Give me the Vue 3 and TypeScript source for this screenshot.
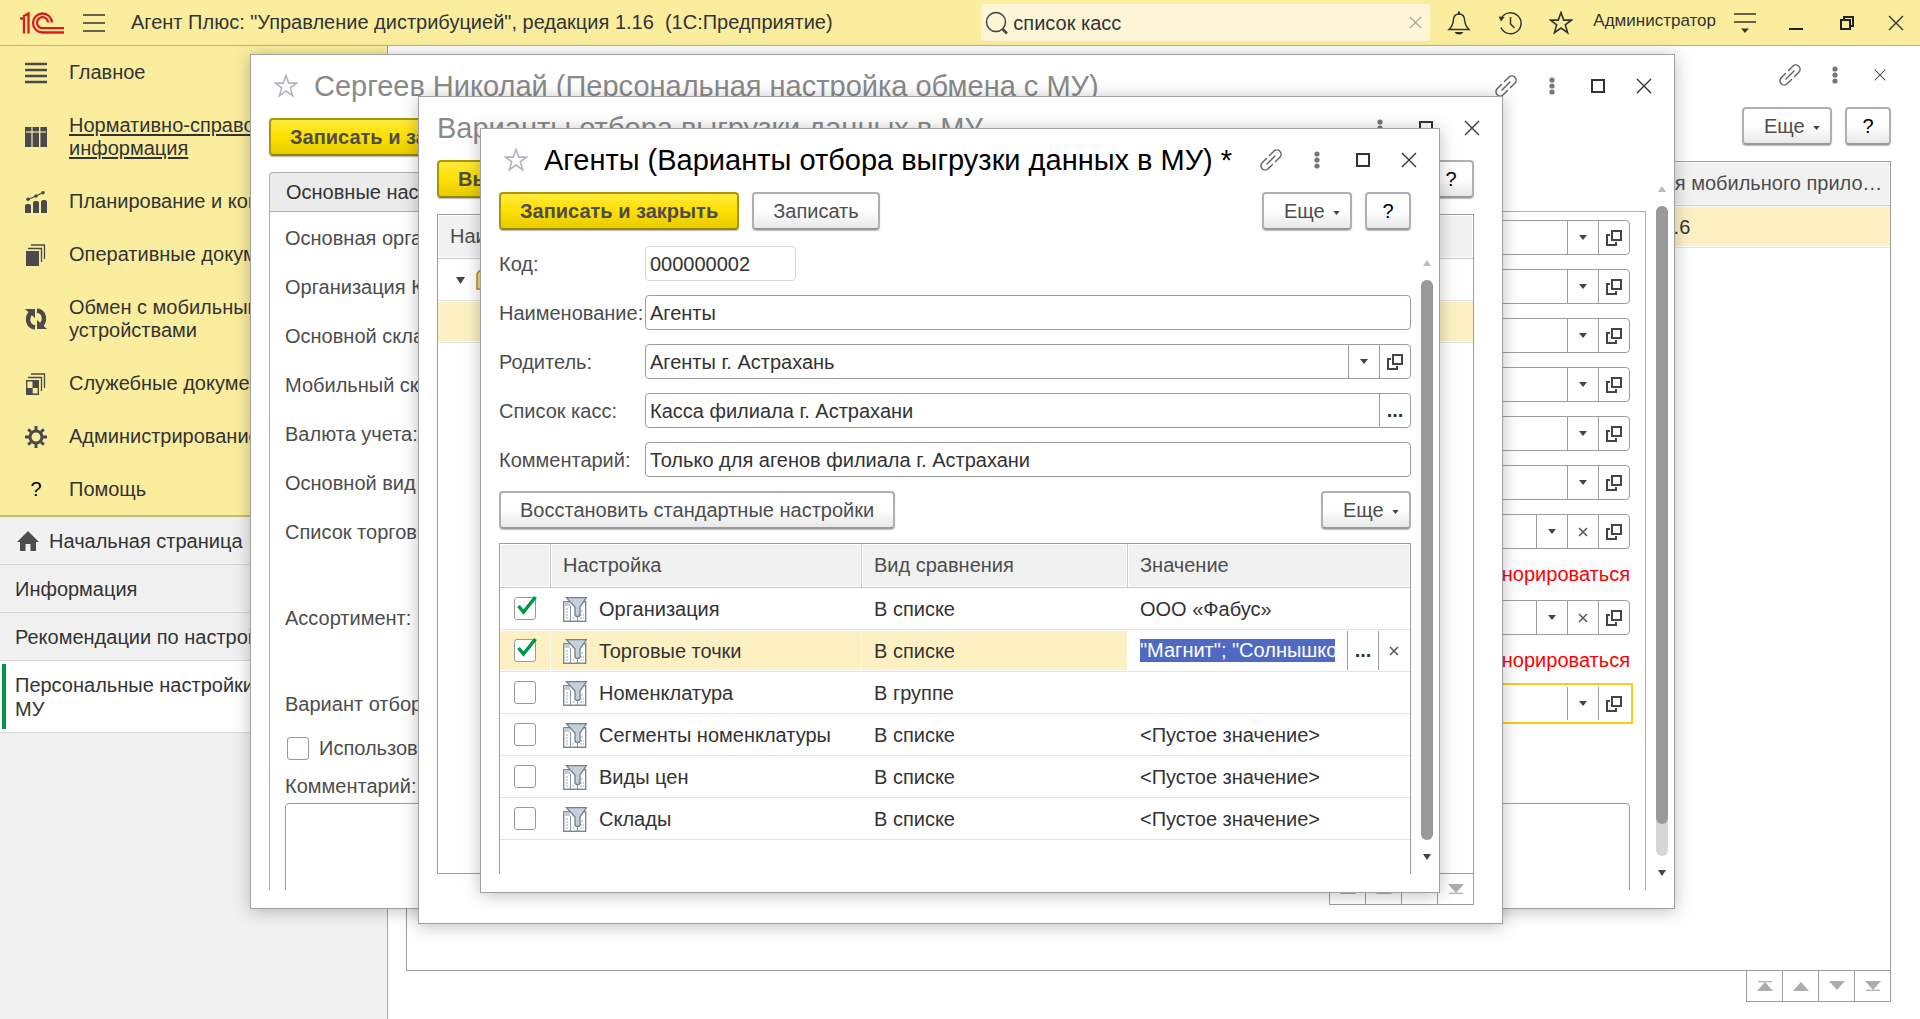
<script setup lang="ts">
import { onMounted, ref } from 'vue'

interface Section { icon: string; text: string; current?: boolean }
interface FormRow { id: string; label: string; clear?: boolean; note?: boolean; focus?: boolean }
interface Setting { on: boolean; name: string; kind: string; value: string; current?: boolean }

const sections: Section[] = [
  { icon: 'lines', text: 'Главное' },
  { icon: 'books', text: 'Нормативно-справочная информация', current: true },
  { icon: 'chart', text: 'Планирование и контроль' },
  { icon: 'stack', text: 'Оперативные документы' },
  { icon: 'sync', text: 'Обмен с мобильными устройствами' },
  { icon: 'stack2', text: 'Служебные документы' },
  { icon: 'gear', text: 'Администрирование' },
  { icon: '', text: 'Помощь' },
]

const tabs = ['Информация', 'Рекомендации по настройке', 'Персональные настройки МУ']

const formRows: FormRow[] = [
  { id: 'org', label: 'Основная организация:' },
  { id: 'orgk', label: 'Организация КПК:' },
  { id: 'store', label: 'Основной склад:' },
  { id: 'mstore', label: 'Мобильный склад:' },
  { id: 'cur', label: 'Валюта учета:' },
  { id: 'price', label: 'Основной вид цен:' },
  { id: 'shops', label: 'Список торговых точек:', clear: true, note: true },
  { id: 'goods', label: 'Ассортимент:', clear: true, note: true },
  { id: 'filter', label: 'Вариант отбора:', focus: true },
]

const settings = ref<Setting[]>([
  { on: true, name: 'Организация', kind: 'В списке', value: 'ООО «Фабус»' },
  { on: true, name: 'Торговые точки', kind: 'В списке', value: '"Магнит"; "Солнышко"', current: true },
  { on: false, name: 'Номенклатура', kind: 'В группе', value: '' },
  { on: false, name: 'Сегменты номенклатуры', kind: 'В списке', value: '<Пустое значение>' },
  { on: false, name: 'Виды цен', kind: 'В списке', value: '<Пустое значение>' },
  { on: false, name: 'Склады', kind: 'В списке', value: '<Пустое значение>' },
])

const pagers = ['first', 'up', 'down', 'last']
const search = ref('список касс')
const code = ref('000000002')
const title = ref('Агенты')
const parent = ref('Агенты г. Астрахань')
const cash = ref('Касса филиала г. Астрахани')
const comment = ref('Только для агенов филиала г. Астрахани')
const scrollBack = ref(95)
const scrollFront = ref(100)

// The edited cell opens with its whole value selected, caret at the start.
onMounted(() => {
  const edit = document.querySelector<HTMLInputElement>('#edit-value')
  if (!edit) return
  edit.focus({ preventScroll: true })
  edit.setSelectionRange(0, edit.value.length, 'backward')
  edit.scrollLeft = 0
  requestAnimationFrame(() => { edit.scrollLeft = 0 })
})
</script>

<template>
  <svg class="sprite" aria-hidden="true">
    <symbol id="i-lines" viewBox="0 0 22 22"><path d="M0 2h22M0 8h22M0 14h22M0 20h22" stroke="#4a4a4a" stroke-width="2.6" /></symbol>
    <symbol id="i-books" viewBox="0 0 22 22"><path d="M0 1h6.4v20H0zM7.6 1H14v20H7.6zM15.4 1H22v20h-6.6z" fill="#4a4a4a" /><path d="M1 6h20" stroke="#fbed9e" stroke-width="1.2" /></symbol>
    <symbol id="i-chart" viewBox="0 0 22 22"><path d="M0 15q0-2 2-2h2q2 0 2 2v7H0zM8 12q0-2 2-2h2q2 0 2 2v10H8zM16 11q0-2 2-2h2q2 0 2 2v11h-6z" fill="#4a4a4a" /><path d="M3 8.500L11 5l7-3.500" stroke="#4a4a4a" fill="none" stroke-width="1.2" /><circle cx="3" cy="8.200" r="1.800" fill="#4a4a4a" /><circle cx="11" cy="5" r="1.800" fill="#4a4a4a" /><circle cx="18" cy="1.800" r="1.800" fill="#4a4a4a" /></symbol>
    <symbol id="i-stack" viewBox="0 0 22 22"><path d="M1 7h13v15H1z" fill="#4a4a4a" /><path d="M3 4.500h13.500V18M6 1h13.500v14" fill="none" stroke="#4a4a4a" stroke-width="1.3" /></symbol>
    <symbol id="i-stack2" viewBox="0 0 22 22"><path d="M1.700 7.700h11.600v13.600H1.700z" fill="none" stroke="#4a4a4a" stroke-width="1.4" /><path d="M7.500 8h6v7h-6zM1.700 15h6v6.500h-6z" fill="#4a4a4a" /><path d="M3 4.500h13.500V18M6 1h13.500v14" fill="none" stroke="#4a4a4a" stroke-width="1.3" /></symbol>
    <symbol id="i-sync" viewBox="0 0 22 22"><path d="M10 19.500C2.500 18.500 1 9.500 6 4.500M12 2.500C19.500 3.500 21 12.500 16 17.500" fill="none" stroke="#4a4a4a" stroke-width="4.4" /><path d="M0 1h10v9zM22 21H12v-9z" fill="#4a4a4a" /></symbol>
    <symbol id="i-gear" viewBox="0 0 22 22"><circle cx="11" cy="11" r="6" fill="none" stroke="#4a4a4a" stroke-width="3" /><path d="M11 0v4M11 18v4M0 11h4M18 11h4M3.200 3.200L6 6M16 16l2.800 2.800M3.200 18.800L6 16M16 6l2.800-2.800" stroke="#4a4a4a" stroke-width="3" /></symbol>
    <symbol id="i-home" viewBox="0 0 22 20"><path d="M11 0l11 11h-3v9h-5.500v-7h-5v7H3v-9H0z" fill="#4d4d4d" /></symbol>
    <symbol id="i-star" viewBox="0 0 24 24"><path d="M12 1.500l2.700 7.600h7.800l-6.200 4.800 2.300 7.800L12 17l-6.600 4.700 2.300-7.800L1.500 9.100h7.800z" fill="none" stroke="currentColor" stroke-width="1.6" /></symbol>
    <symbol id="i-link" viewBox="0 0 24 24"><g fill="none" stroke="#666" stroke-width="1.5" stroke-linecap="round"><path d="M8 16l8-8" /><path d="M10.500 7.500l4.300-4.300a4.200 4.200 0 016 6L16.500 13.500M13.500 16.500l-4.300 4.300a4.200 4.200 0 01-6-6L7.500 10.500" /></g></symbol>
    <symbol id="i-dots" viewBox="0 0 6 18"><circle cx="3" cy="3" r="2.600" fill="#777" /><circle cx="3" cy="9" r="2.600" fill="#777" /><circle cx="3" cy="15" r="2.600" fill="#777" /></symbol>
    <symbol id="i-max" viewBox="0 0 14 14"><path d="M1 1h12v12H1z" fill="none" stroke="#333" stroke-width="2" /></symbol>
    <symbol id="i-close" viewBox="0 0 16 16"><path d="M1 1l14 14M15 1L1 15" stroke="currentColor" stroke-width="1.4" /></symbol>
    <symbol id="i-x" viewBox="0 0 10 10"><path d="M1 1l8 8M9 1L1 9" stroke="#555" stroke-width="1.5" /></symbol>
    <symbol id="i-open" viewBox="0 0 16 16"><path d="M6 1h9v9H6z" fill="none" stroke="#444" stroke-width="2" /><path d="M4 5H1v10h9v-3" fill="none" stroke="#444" stroke-width="2" /></symbol>
    <symbol id="i-caret" viewBox="0 0 8 5"><path d="M0 0h8L4 5z" fill="#444" /></symbol>
    <symbol id="i-first" viewBox="0 0 16 10"><path d="M1 .7h14" stroke="#a9a9a9" stroke-width="1.2" /><path d="M8 1l8 9H0z" fill="#adadad" /></symbol>
    <symbol id="i-up" viewBox="0 0 16 10"><path d="M8 1l8 9H0z" fill="#adadad" /></symbol>
    <symbol id="i-down" viewBox="0 0 16 10"><path d="M8 9L0 0h16z" fill="#adadad" /></symbol>
    <symbol id="i-last" viewBox="0 0 16 10"><path d="M8 9L0 0h16z" fill="#adadad" /><path d="M1 9.300h14" stroke="#a9a9a9" stroke-width="1.2" /></symbol>
    <symbol id="i-filter" viewBox="0 0 24 25"><path d="M.7 4.700h22v19.600H.7z" fill="#fff" stroke="#7d8a94" stroke-width="1.4" /><path d="M1 5h6v4H1z" fill="#c3ccd4" /><path d="M7.500 9v15M14.500 9v15" stroke="#8a97a1" /><path d="M3 12h2.500M3 15h2.500M3 18h2.500M3 21h2.500M9.500 21h3M17 18h4M17 21h4M18 14h3" stroke="#9ba6af" stroke-dasharray="2 1" /><path d="M3.500.7h20L17 10v7.500q0 2-2.500 2T12 17.500V10z" fill="#c4cfdb" stroke="#73818c" stroke-width="1.3" /></symbol>
  </svg>

  <div class="app">
    <header class="topbar">
      <svg class="logo" viewBox="0 0 44 22" role="img" aria-label="1С"><g fill="none" stroke="#da1b20" stroke-width="2.3"><path d="M0 6.500h4v15M3 4.500l5.500-3v20" /><path d="M32 10.500A9.500 9.500 0 1022.500 20.500H44M28 10.500A5.500 5.500 0 1022.500 16.200H44" /></g></svg>
      <button class="flat burger" aria-label="Меню"><svg width="22" height="18" viewBox="0 0 22 18"><path d="M0 1h22M0 9h22M0 17h22" stroke="#333" stroke-width="1.5" /></svg></button>
      <h1>Агент Плюс: "Управление дистрибуцией", редакция 1.16&nbsp; (1С:Предприятие)</h1>
      <div class="search">
        <svg width="24" height="24" viewBox="0 0 24 24" fill="none" stroke="#444" stroke-width="1.5"><circle cx="11" cy="11" r="9.500" /><path d="M17.500 18l4.500 4.500" stroke-width="2.5" /></svg>
        <input v-model="search" aria-label="Поиск">
        <button class="flat" aria-label="Очистить"><svg class="muted" width="13" height="13"><use href="#i-close" /></svg></button>
      </div>
      <div class="tools">
        <button class="flat slot" aria-label="Уведомления"><svg width="22" height="24" viewBox="0 0 22 24"><path d="M1 18.500c3-3 4-5 4.300-9C5.500 5.500 7.500 3 11 3s5.500 2.500 5.700 6.500c.3 4 1.300 6 4.300 9z" fill="none" stroke="#333" stroke-width="1.5" /><path d="M11 .5v3" stroke="#333" stroke-width="2" /><path d="M6.500 21h9q-1.500 2.500-4.500 2.500T6.500 21z" fill="#333" /></svg></button>
        <button class="flat slot" aria-label="История"><svg width="24" height="24" viewBox="0 0 24 24" fill="none" stroke="#333" stroke-width="1.5"><path d="M3.500 7A10.500 10.500 0 113 16.500M12.500 6v7l4 4" /><path d="M.5 5.500l6 .5-3.500 4.500z" fill="#333" stroke="none" /></svg></button>
        <button class="flat slot dark" aria-label="Избранное"><svg width="24" height="24"><use href="#i-star" /></svg></button>
        <a class="user" href="#">Администратор</a>
        <button class="flat slot" aria-label="Настройки"><svg width="22" height="20" viewBox="0 0 22 20"><path d="M0 1h22M0 9h22" stroke="#333" stroke-width="1.6" /><path d="M7 15.500h8l-4 4.500z" fill="#333" /></svg></button>
        <button class="flat slot" aria-label="Свернуть"><svg width="14" height="16" viewBox="0 0 14 16"><path d="M0 14h14" stroke="#222" stroke-width="2" /></svg></button>
        <button class="flat slot" aria-label="Восстановить"><svg width="14" height="14" viewBox="0 0 14 14" fill="none" stroke="#222" stroke-width="2"><path d="M1 4h9v9H1zM4 4V1h9v9h-3" /></svg></button>
        <button class="flat slot dark" aria-label="Закрыть"><svg width="16" height="16"><use href="#i-close" /></svg></button>
      </div>
    </header>

    <div class="workspace">
      <aside>
        <nav class="sections">
          <a v-for="s in sections" :key="s.text" href="#" :class="{ current: s.current }">
            <svg v-if="s.icon" width="22" height="22"><use :href="'#i-' + s.icon" /></svg>
            <span v-else class="question">?</span>
            <span class="caption">{{ s.text }}</span>
          </a>
        </nav>
        <nav class="tabs">
          <a href="#" class="home"><svg width="22" height="20"><use href="#i-home" /></svg>Начальная страница</a>
          <a v-for="(t, i) in tabs" :key="t" href="#" :class="{ open: i === 2 }"><span>{{ t }}</span></a>
        </nav>
      </aside>

      <main class="page">
        <div class="win-head">
          <div class="title"></div>
          <button class="flat tool" aria-label="Ссылка"><svg width="24" height="24"><use href="#i-link" /></svg></button>
          <button class="flat tool" aria-label="Ещё действия"><svg width="6" height="18"><use href="#i-dots" /></svg></button>
          <button class="flat tool" aria-label="Закрыть"><svg width="12" height="12"><use href="#i-close" /></svg></button>
        </div>
        <div class="commands">
          <span class="spring"></span>
          <button class="btn more">Еще <svg width="7" height="4"><use href="#i-caret" /></svg></button>
          <button class="btn help">?</button>
        </div>
        <div class="list">
          <div class="grid-box">
            <table>
              <colgroup><col><col class="version"></colgroup>
              <thead><tr><th></th><th>Версия мобильного приложения</th></tr></thead>
              <tbody><tr class="current"><td></td><td>1.16.1.6</td></tr></tbody>
            </table>
          </div>
          <div class="pager"><button v-for="p in pagers" :key="p" :aria-label="p"><svg width="16" height="10"><use :href="'#i-' + p" /></svg></button></div>
        </div>
      </main>
    </div>

    <section class="window exchange">
      <div class="win-head">
        <button class="flat fav" aria-label="Избранное"><svg width="24" height="24"><use href="#i-star" /></svg></button>
        <h2 class="title">Сергеев Николай (Персональная настройка обмена с МУ)</h2>
        <button class="flat tool" aria-label="Ссылка"><svg width="24" height="24"><use href="#i-link" /></svg></button>
        <button class="flat tool" aria-label="Ещё действия"><svg width="6" height="18"><use href="#i-dots" /></svg></button>
        <button class="flat tool" aria-label="Развернуть"><svg width="14" height="14"><use href="#i-max" /></svg></button>
        <button class="flat tool" aria-label="Закрыть"><svg width="16" height="16"><use href="#i-close" /></svg></button>
      </div>
      <div class="commands"><button class="btn primary">Записать и закрыть</button></div>
      <div class="body">
        <div class="content">
          <button class="tab">Основные настройки</button>
          <div class="panel">
            <template v-for="r in formRows" :key="r.id">
              <div class="row wide">
                <label :for="r.id">{{ r.label }}</label>
                <div class="field" :class="{ focus: r.focus }">
                  <input :id="r.id">
                  <button aria-label="Выбрать"><svg width="8" height="5"><use href="#i-caret" /></svg></button>
                  <button v-if="r.clear" aria-label="Очистить"><svg width="10" height="10"><use href="#i-x" /></svg></button>
                  <button aria-label="Открыть"><svg width="16" height="16"><use href="#i-open" /></svg></button>
                </div>
              </div>
              <p v-if="r.note" class="note">Если указан вариант отбора, реквизит будет игнорироваться</p>
            </template>
            <label class="tick"><span class="check"><input type="checkbox"></span>Использовать</label>
            <div class="remark">
              <label for="remark">Комментарий:</label>
              <textarea id="remark"></textarea>
            </div>
          </div>
        </div>
        <div class="scroll">
          <span class="arrow top"></span>
          <div class="track"><div class="thumb" :style="{ height: scrollBack + '%' }"></div></div>
          <span class="arrow"></span>
        </div>
      </div>
    </section>

    <section class="window variants">
      <div class="win-head bare">
        <h2 class="title">Варианты отбора выгрузки данных в МУ</h2>
        <button class="flat tool" aria-label="Ещё действия"><svg width="6" height="18"><use href="#i-dots" /></svg></button>
        <button class="flat tool" aria-label="Развернуть"><svg width="14" height="14"><use href="#i-max" /></svg></button>
        <button class="flat tool" aria-label="Закрыть"><svg width="16" height="16"><use href="#i-close" /></svg></button>
      </div>
      <div class="commands">
        <button class="btn primary">Выбрать</button>
        <span class="spring"></span>
        <button class="btn help">?</button>
      </div>
      <div class="list">
        <div class="grid-box">
          <table>
            <thead><tr><th>Наименование</th></tr></thead>
            <tbody>
              <tr><td><span class="branch"><svg width="9" height="7" viewBox="0 0 9 7"><path d="M0 0h9L4.500 7z" fill="#444" /></svg><svg width="22" height="20" viewBox="0 0 22 20"><path d="M1 4l2-3h6l2 3h10v15H1z" fill="#f8d878" stroke="#b58a30" stroke-width="1.5" /></svg>Агенты</span></td></tr>
              <tr class="current"><td></td></tr>
            </tbody>
          </table>
        </div>
        <div class="pager"><button v-for="p in pagers" :key="p" :aria-label="p"><svg width="16" height="10"><use :href="'#i-' + p" /></svg></button></div>
      </div>
    </section>

    <section class="window agents">
      <div class="win-head">
        <button class="flat fav" aria-label="Избранное"><svg width="24" height="24"><use href="#i-star" /></svg></button>
        <h2 class="title">Агенты (Варианты отбора выгрузки данных в МУ) *</h2>
        <button class="flat tool" aria-label="Ссылка"><svg width="24" height="24"><use href="#i-link" /></svg></button>
        <button class="flat tool" aria-label="Ещё действия"><svg width="6" height="18"><use href="#i-dots" /></svg></button>
        <button class="flat tool" aria-label="Развернуть"><svg width="14" height="14"><use href="#i-max" /></svg></button>
        <button class="flat tool" aria-label="Закрыть"><svg width="16" height="16"><use href="#i-close" /></svg></button>
      </div>
      <div class="commands">
        <button class="btn primary">Записать и закрыть</button>
        <button class="btn">Записать</button>
        <span class="spring"></span>
        <button class="btn more">Еще <svg width="7" height="4"><use href="#i-caret" /></svg></button>
        <button class="btn help">?</button>
      </div>
      <div class="body">
        <div class="content">
          <div class="form">
            <div class="row"><label for="code">Код:</label><div class="field short"><input id="code" v-model="code"></div></div>
            <div class="row"><label for="title">Наименование:</label><div class="field"><input id="title" v-model="title"></div></div>
            <div class="row">
              <label for="parent">Родитель:</label>
              <div class="field">
                <input id="parent" v-model="parent">
                <button aria-label="Выбрать"><svg width="8" height="5"><use href="#i-caret" /></svg></button>
                <button aria-label="Открыть"><svg width="16" height="16"><use href="#i-open" /></svg></button>
              </div>
            </div>
            <div class="row"><label for="cash">Список касс:</label><div class="field"><input id="cash" v-model="cash"><button>...</button></div></div>
            <div class="row"><label for="comment">Комментарий:</label><div class="field"><input id="comment" v-model="comment"></div></div>
          </div>
          <div class="commands inner">
            <button class="btn">Восстановить стандартные настройки</button>
            <span class="spring"></span>
            <button class="btn more">Еще <svg width="7" height="4"><use href="#i-caret" /></svg></button>
          </div>
          <div class="grid-box">
            <table>
              <colgroup><col class="c-on"><col class="c-name"><col class="c-kind"><col></colgroup>
              <thead><tr><th></th><th>Настройка</th><th>Вид сравнения</th><th>Значение</th></tr></thead>
              <tbody>
                <tr v-for="s in settings" :key="s.name" :class="{ current: s.current }">
                  <td class="on">
                    <label class="check">
                      <input v-model="s.on" type="checkbox" :aria-label="s.name">
                      <svg v-if="s.on" width="22" height="22" viewBox="0 0 22 22"><path d="M2.500 11l5 6L19.500 2" fill="none" stroke="#009646" stroke-width="3.5" /></svg>
                    </label>
                  </td>
                  <td><span class="setting"><svg width="24" height="25"><use href="#i-filter" /></svg>{{ s.name }}</span></td>
                  <td>{{ s.kind }}</td>
                  <td v-if="s.current" class="editing">
                    <div class="editor">
                      <input id="edit-value" v-model="s.value" aria-label="Значение">
                      <button>...</button>
                      <button aria-label="Очистить"><svg width="10" height="10"><use href="#i-x" /></svg></button>
                    </div>
                  </td>
                  <td v-else>{{ s.value }}</td>
                </tr>
              </tbody>
            </table>
          </div>
        </div>
        <div class="scroll">
          <span class="arrow top"></span>
          <div class="track"><div class="thumb" :style="{ height: scrollFront + '%' }"></div></div>
          <span class="arrow"></span>
        </div>
      </div>
    </section>
  </div>
</template>

<style>
body { background: #fff; }
#app { min-height: 100vh; }
</style>

<style scoped>
* { box-sizing: border-box; }
.sprite { position: absolute; width: 0; height: 0; }
.app {
  position: relative;
  display: flex;
  flex-direction: column;
  min-height: 100vh;
  overflow: hidden;
  font: 20px/23px "Liberation Sans", Arial, sans-serif;
  color: #333;
}
button, input, textarea { font: inherit; color: inherit; }
h1, h2, p { margin: 0; font-weight: 400; }
a { color: inherit; text-decoration: none; }
svg { display: block; flex: none; overflow: visible; }
.flat { display: flex; align-items: center; justify-content: center; padding: 0; border: 0; background: none; color: #333; }

.topbar { display: flex; align-items: center; height: 46px; padding-left: 20px; background: #fbed9e; border-bottom: 1px solid #c3b369; }
.logo { width: 44px; height: 22px; }
.burger { margin: 0 26px 0 19px; }
h1 { flex: 1; font-size: 20px; line-height: 23px; white-space: nowrap; overflow: hidden; }
.search { display: flex; align-items: center; flex: 0 1 449px; height: 37px; padding: 0 8px 0 4px; border-radius: 3px; background: #fef6d6; }
.search input { flex: 1; min-width: 0; padding: 2px 4px 0; border: 0; outline: 0; background: none; }
.search .muted { color: #999; }
.tools { display: flex; align-items: center; padding-left: 3px; }
.slot { width: 51px; height: 36px; }
.slot:last-child { width: 48px; }
.user { margin: 0 3px 4px 7px; font-size: 17px; line-height: 20px; }

.workspace { display: flex; flex: 1; }
aside { flex: none; width: 388px; background: #f1f1f1; border-right: 1px solid #bba968; }
.sections { background: #fbed9e; border-bottom: 2px solid #c8bb7a; }
.sections a { display: flex; align-items: center; gap: 22px; padding: 15px 20px 15px 25px; }
.sections a:last-child { padding-bottom: 14px; }
.caption { width: 260px; }
.sections a.current { text-decoration: underline; text-underline-offset: 2px; }
.question { width: 22px; text-align: center; color: #000; }
.tabs { line-height: 24px; }
.tabs a { display: block; padding: 12px 110px 11px 15px; border-bottom: 1px solid #d9d9d9; white-space: nowrap; }
.tabs .home { display: flex; align-items: center; gap: 10px; padding-left: 17px; }
.tabs .open { position: relative; background: #fff; white-space: normal; }
.tabs .open::before { content: ""; position: absolute; inset: 3px auto 3px 2px; width: 4px; background: #009646; }

.page { display: flex; flex-direction: column; flex: 1; min-width: 0; }
.page .win-head { height: 58px; margin-bottom: 3px; padding-right: 18px; }
.page .win-head .tool { width: 45px; }
.page .commands { padding-right: 29px; }
.page .list { padding: 0 29px 17px 18px; }
.page th { padding-right: 2px; }
.version { width: 284px; }

.window {
  position: absolute;
  display: flex;
  flex-direction: column;
  background: #fff;
  border: 1px solid #a0a0a0;
  box-shadow: 0 2px 16px rgba(0, 0, 0, 0.25);
}
.exchange { inset: 54px 245px 110px 250px; }
.variants { inset: 96px 417px 95px 418px; }
.agents { inset: 128px 480px 126px 480px; }

.win-head { display: flex; align-items: center; flex: none; height: 61px; margin-bottom: 2px; padding: 0 7px 0 23px; }
.win-head.bare { padding-left: 18px; }
.fav { margin-right: 16px; color: #b0b5bd; }
.title { flex: 1; min-width: 0; font-size: 29px; line-height: 34px; color: #8a8a8a; white-space: nowrap; overflow: hidden; }
.agents .title { color: #000; }
.tool { width: 46px; height: 36px; }
.commands { display: flex; gap: 13px; flex: none; margin-bottom: 15px; padding: 0 28px 0 18px; }
.commands.inner { margin: 14px 0 13px; padding: 0; }
.spring { flex: 1; }
.btn {
  height: 38px;
  margin-bottom: 1px;
  padding: 0 19px;
  border: 2px solid #b0b0b0;
  border-bottom-color: #9a9a9a;
  border-radius: 4px;
  background: linear-gradient(#fff 50%, #e8e8e8);
  box-shadow: 0 1px 1px #bbb;
  color: #4d4d4d;
  white-space: nowrap;
}
.primary { border-color: #a89806; border-bottom-color: #978700; background: linear-gradient(#ffea3c, #fee000 50%, #e6cb00); font-weight: 700; }
.more { display: flex; align-items: center; justify-content: space-between; width: 90px; padding: 0 10px 0 20px; }
.more svg { margin-top: 3px; }
.help { width: 46px; padding: 0; color: #000; }

.list { display: flex; flex-direction: column; flex: 1; padding: 0 28px 18px 18px; }
.list .grid-box { flex: 1; border-bottom: 1px solid #9d9d9d; }
.pager { display: flex; align-self: flex-end; margin-top: -1px; border: 1px solid #9d9d9d; }
.pager button { display: flex; align-items: center; justify-content: center; width: 36px; height: 30px; padding: 0; border: 0; border-right: 1px solid #9d9d9d; background: #fff; }
.pager button:last-child { width: 35px; border-right: 0; }

.grid-box { border: 1px solid #9d9d9d; border-bottom: 0; }
table { width: 100%; table-layout: fixed; border-spacing: 0; }
th { height: 44px; padding: 0 12px; background: #f1f1f1; border-right: 1px solid #c9c9c9; border-bottom: 1px solid #c9c9c9; box-shadow: inset 0 0 0 1px #fff; color: #4d4d4d; font-weight: 400; text-align: left; white-space: nowrap; overflow: hidden; text-overflow: ellipsis; }
th:last-child { border-right: 0; }
td { height: 42px; padding: 1px 12px 0; border-bottom: 1px solid #e4e4e4; white-space: nowrap; }
.current td { background: #fdf1c4; box-shadow: inset 0 1px #fff, inset 0 -1px #fff; }
.agents .current td { border-right: 1px solid #fff; }
.c-on { width: 51px; }
.c-name { width: 311px; }
.c-kind { width: 266px; }
.on { padding: 0 0 0 14px; }
.setting { display: flex; align-items: center; gap: 12px; }
.branch { display: flex; align-items: center; gap: 11px; padding-left: 6px; }
.agents .current .editing { padding: 1px 1px 1px 0; background: #fff; border-right: 0; }
.editor { display: flex; align-items: center; height: 39px; }
.editor input { flex: 1; min-width: 0; height: 23px; margin: 0 12px; padding: 0; border: 0; outline: 0; }
.editor input::selection { background: #5069c3; color: #fff; }
.editor button, .field button { display: flex; align-items: center; justify-content: center; align-self: stretch; flex: none; width: 31px; padding: 0; border: 0; border-left: 1px solid #9d9d9d; background: none; font-weight: 700; }

.check { position: relative; display: block; width: 22px; height: 23px; }
.check input { display: block; width: 22px; height: 23px; margin: 0; appearance: none; border: 1px solid #999; border-radius: 3px; background: #fff; }
.check svg { position: absolute; top: -2px; left: 2px; }

.body { display: flex; flex: 1; gap: 10px; min-height: 0; padding: 0 6px 18px 18px; }
.content { flex: 1; min-width: 0; overflow: hidden; }
.agents .content { display: flex; flex-direction: column; }
.agents .grid-box { flex: 1; }
.form { display: flex; flex-direction: column; gap: 14px; }
.row { display: flex; align-items: center; }
.row label { flex: none; width: 146px; padding-top: 2px; color: #4d4d4d; }
.row.wide label { width: 240px; }
.field { display: flex; flex: 1; min-width: 0; height: 35px; border: 1px solid #9d9d9d; border-radius: 4px; background: #fff; }
.field input { flex: 1; min-width: 0; padding: 2px 4px 0; border: 0; outline: 0; background: none; }
.field.short { flex: 0 0 151px; border-color: #d8d8d8; }
.field.focus { border-color: transparent; border-radius: 0; outline: 2px solid #fcca17; outline-offset: 1px; }

.tab { display: block; height: 39px; padding: 0 16px; border: 1px solid #b0b0b0; border-bottom: 0; border-radius: 4px 4px 0 0; background: #ebebeb; }
.panel { display: flex; flex-direction: column; gap: 14px; min-height: 800px; padding: 8px 15px; border: 1px solid #b0b0b0; color: #4d4d4d; }
.note { color: #f00; text-align: right; }
.tick { display: flex; align-items: center; gap: 10px; height: 26px; padding-left: 2px; }
.remark { display: flex; flex-direction: column; gap: 5px; }
.remark textarea { height: 160px; border: 1px solid #9d9d9d; border-radius: 4px; resize: none; }

.scroll { display: flex; flex-direction: column; flex: none; width: 12px; }
.arrow { display: flex; align-items: center; justify-content: center; height: 34px; }
.arrow::before { content: ""; border: 4px solid transparent; border-top: 6px solid #444; border-bottom: 0; }
.arrow.top::before { border-top: 0; border-bottom: 6px solid #bbb; }
.track { flex: 1; border-radius: 6px; background: #d6d6d6; }
.thumb { border-radius: 6px; background: #999; }
</style>
